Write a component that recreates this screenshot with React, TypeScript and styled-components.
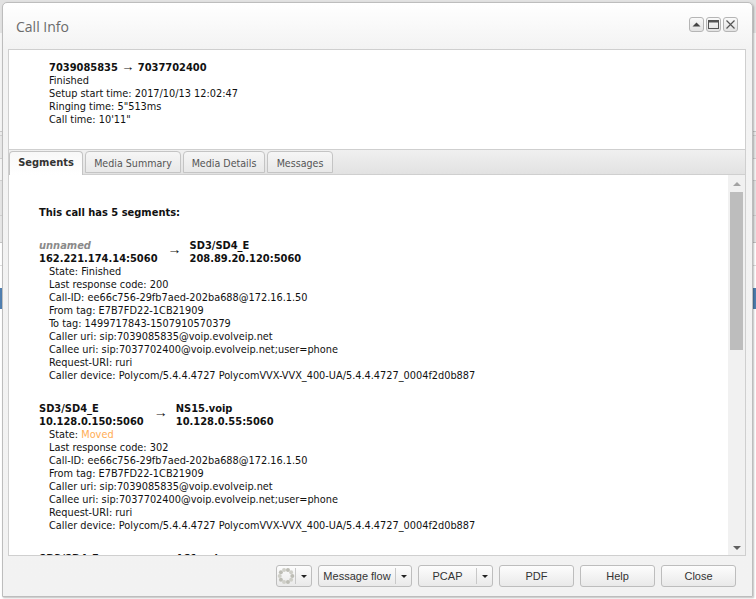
import React from "react";
import styled, { createGlobalStyle } from "styled-components";

const Global = createGlobalStyle`
  html, body { margin: 0; padding: 0; width: 756px; height: 599px; overflow: hidden; background: #fff; }
  #root { width: 756px; height: 599px; position: relative; overflow: hidden; }
`;

const Backdrop = styled.div`
  display: flex;
  flex-direction: column;
  width: 756px;
  height: 599px;
  background: #fff;
`;
const BackdropBand = styled.div<{ $h: number; $bg: string; $line?: string }>`
  height: ${(p) => p.$h}px;
  background: ${(p) => p.$bg};
  border-bottom: ${(p) => (p.$line ? `1px solid ${p.$line}` : "none")};
  flex: none;
  box-sizing: border-box;
`;

const Win = styled.section`
  position: absolute;
  left: 2px;
  top: 2px;
  width: 751px;
  height: 595px;
  box-sizing: border-box;
  display: flex;
  flex-direction: column;
  border: 1px solid #bdbdbd;
  border-radius: 5px 5px 0 0;
  background: linear-gradient(#ffffff 0, #f3f3f3 46px, #f2f2f2 100%);
  box-shadow: 1px 1px 2px rgba(0, 0, 0, 0.25);
  font-family: "DejaVu Sans Condensed", "DejaVu Sans", sans-serif;
  font-stretch: condensed;
  font-size: 10.85px;
  line-height: 13px;
  color: #111;
`;
const TitleBar = styled.header`
  height: 46px;
  flex: none;
  display: flex;
  align-items: flex-start;
  justify-content: space-between;
  box-sizing: border-box;
  padding: 14px 14px 0 13px;
`;
const Title = styled.h1`
  margin: 0;
  font-family: "Open Sans", sans-serif;
  font-stretch: normal;
  font-size: 14px;
  font-weight: 400;
  line-height: 19px;
  color: #6b6b6b;
`;
const WinControls = styled.div`
  display: flex;
  gap: 2px;
`;
const WinControl = styled.button`
  width: 15px;
  height: 15px;
  padding: 0;
  box-sizing: border-box;
  border: 1px solid #b5b5b5;
  border-radius: 3px;
  background: linear-gradient(#fafafa, #e2e2e2);
  display: flex;
  align-items: center;
  justify-content: center;
`;
const Body = styled.div`
  flex: none;
  height: 507px;
  margin: 0 6px 0 5px;
  box-sizing: border-box;
  border: 1px solid #cfcfcf;
  background: #fff;
  display: flex;
  flex-direction: column;
`;
const Summary = styled.div`
  height: 99px;
  flex: none;
  box-sizing: border-box;
  padding: 11px 0 0 40px;
`;
const Strong = styled.div`
  font-weight: 700;
  font-size: 11px;
`;
const HeadArrow = styled.span`
  font-family: "Liberation Sans", sans-serif;
  font-size: 13px;
  line-height: 0;
`;
const TabStrip = styled.nav`
  height: 26px;
  flex: none;
  box-sizing: border-box;
  display: flex;
  align-items: flex-end;
  gap: 2px;
  border-top: 1px solid #cfcfcf;
  border-bottom: 1px solid #cfcfcf;
  background: linear-gradient(#f0f0f0, #e2e2e2);
`;
const Tab = styled.div<{ $active?: boolean; $w: number }>`
  width: ${(p) => p.$w}px;
  height: ${(p) => (p.$active ? 24 : 22)}px;
  margin-bottom: ${(p) => (p.$active ? -1 : 1)}px;
  box-sizing: border-box;
  border: 1px solid #c4c4c4;
  border-bottom: ${(p) => (p.$active ? "none" : "1px solid #c4c4c4")};
  border-radius: 4px 4px 0 0;
  background: ${(p) => (p.$active ? "linear-gradient(#f8f8f8, #ffffff)" : "linear-gradient(#f6f6f6, #e8e8e8)")};
  color: ${(p) => (p.$active ? "#333" : "#555")};
  font-weight: ${(p) => (p.$active ? 700 : 400)};
  font-size: ${(p) => (p.$active ? 11 : 10.6)}px;
  text-align: center;
  line-height: 22px;
`;
const ContentRow = styled.div`
  flex: 1;
  min-height: 0;
  display: flex;
`;
const Scroller = styled.div`
  flex: 1;
  min-width: 0;
  overflow: hidden;
  padding: 31px 0 0 30px;
`;
const Heading = styled.div`
  font-weight: 700;
  font-size: 11px;
  margin-bottom: 20px;
`;
const Segment = styled.article`
  margin-bottom: 20px;
`;
const Route = styled.div`
  display: flex;
  align-items: center;
  gap: 10px;
  font-weight: 700;
  font-size: 11px;
`;
const Unnamed = styled.div`
  font-style: italic;
  color: #8a8a8a;
`;
const RouteArrow = styled.span`
  font-family: "Liberation Sans", sans-serif;
  font-weight: 400;
  font-size: 14px;
  width: 12px;
  margin-top: -6px;
`;
const Details = styled.div`
  padding-left: 10px;
`;
const Moved = styled.span`
  color: #ffad55;
`;
const ScrollTrack = styled.div`
  width: 17px;
  flex: none;
  background: #f1f1f1;
  display: flex;
  flex-direction: column;
  align-items: center;
  box-sizing: border-box;
  padding-top: 7px;
`;
const ArrowUp = styled.i`
  width: 0;
  height: 0;
  border-left: 4px solid transparent;
  border-right: 4px solid transparent;
  border-bottom: 4px solid #a3a3a3;
`;
const Thumb = styled.div`
  width: 13px;
  height: 158px;
  margin-top: 6px;
  background: #bdbdbd;
`;
const ArrowDown = styled.i`
  width: 0;
  height: 0;
  margin-top: auto;
  margin-bottom: 5px;
  border-left: 4px solid transparent;
  border-right: 4px solid transparent;
  border-top: 4px solid #606060;
`;
const Footer = styled.footer`
  flex: 1;
  display: flex;
  justify-content: flex-end;
  gap: 6px;
  padding: 9px 16px 0 0;
  font-family: "Liberation Sans", sans-serif;
  font-stretch: normal;
  font-size: 11px;
`;
const Btn = styled.button<{ $w: number }>`
  width: ${(p) => p.$w}px;
  height: 22px;
  padding: 0;
  box-sizing: border-box;
  border: 1px solid #bdbdbd;
  border-radius: 3px;
  background: linear-gradient(#fdfdfd, #e9e9e9);
  color: #333;
  font: inherit;
  display: flex;
  align-items: center;
  justify-content: center;
`;
const BtnLabel = styled.span`
  flex: 1;
  display: flex;
  align-items: center;
  justify-content: center;
`;
const CaretZone = styled.span`
  width: 15px;
  height: 16px;
  flex: none;
  border-left: 1px solid #c8c8c8;
  display: flex;
  align-items: center;
  justify-content: center;
`;
const Caret = styled.i`
  width: 0;
  height: 0;
  border-left: 3px solid transparent;
  border-right: 3px solid transparent;
  border-top: 3px solid #222;
`;

const Spinner = () => (
  <svg width="18" height="18" viewBox="0 0 18 18">
    {Array.from({ length: 10 }).map((_, i) => {
      const a = (i / 10) * Math.PI * 2;
      return (
        <circle key={i} cx={9 + 6.3 * Math.cos(a)} cy={9 + 6.3 * Math.sin(a)} r={2} fill={i % 2 ? "#cfcfc8" : "#bdbdb5"} />
      );
    })}
  </svg>
);

const seg1 = [
  "Last response code: 200",
  "Call-ID: ee66c756-29fb7aed-202ba688@172.16.1.50",
  "From tag: E7B7FD22-1CB21909",
  "To tag: 1499717843-1507910570379",
  "Caller uri: sip:7039085835@voip.evolveip.net",
  "Callee uri: sip:7037702400@voip.evolveip.net;user=phone",
  "Request-URI: ruri",
  "Caller device: Polycom/5.4.4.4727 PolycomVVX-VVX_400-UA/5.4.4.4727_0004f2d0b887",
];
const seg2 = [
  "Last response code: 302",
  "Call-ID: ee66c756-29fb7aed-202ba688@172.16.1.50",
  "From tag: E7B7FD22-1CB21909",
  "Caller uri: sip:7039085835@voip.evolveip.net",
  "Callee uri: sip:7037702400@voip.evolveip.net;user=phone",
  "Request-URI: ruri",
  "Caller device: Polycom/5.4.4.4727 PolycomVVX-VVX_400-UA/5.4.4.4727_0004f2d0b887",
];

const bands: [number, string, string?][] = [
  [33, "#e2e2e2"],
  [99, "#f5f5f5", "#c8c8c8"],
  [4, "#ececec", "#d0d0d0"],
  [23, "#e8e8e8", "#cfcfcf"],
  [22, "#f4f4f4", "#cfcfcf"],
  [35, "#e4e4e4", "#cfcfcf"],
  [27, "#e6e6e6", "#c4c4c4"],
  [23, "#ffffff", "#dddddd"],
  [22, "#ffffff"],
  [21, "#4f7fb0"],
  [270, "#ffffff"],
];

export default function App() {
  return (
    <>
      <Global />
      <Backdrop>
        {bands.map(([h, bg, line], i) => (
          <BackdropBand key={i} $h={h} $bg={bg} $line={line} />
        ))}
      </Backdrop>
      <Win>
        <TitleBar>
          <Title>Call Info</Title>
          <WinControls>
            <WinControl aria-label="Collapse">
              <svg width="9" height="9" viewBox="0 0 9 9"><path d="M0.5 6.5 L4.5 2.5 L8.5 6.5 Z" fill="#444" /></svg>
            </WinControl>
            <WinControl aria-label="Maximize">
              <svg width="11" height="9" viewBox="0 0 11 9"><rect x="0.5" y="0.5" width="10" height="8" fill="none" stroke="#555" /><rect x="0.5" y="0.5" width="10" height="2" fill="#555" /></svg>
            </WinControl>
            <WinControl aria-label="Close">
              <svg width="9" height="9" viewBox="0 0 9 9"><path d="M0.5 0.5 L8.5 8.5 M8.5 0.5 L0.5 8.5" stroke="#555" strokeWidth="1.2" /></svg>
            </WinControl>
          </WinControls>
        </TitleBar>
        <Body>
          <Summary>
            <Strong>7039085835 <HeadArrow>→</HeadArrow> 7037702400</Strong>
            <div>Finished</div>
            <div>Setup start time: 2017/10/13 12:02:47</div>
            <div>Ringing time: 5"513ms</div>
            <div>Call time: 10'11"</div>
          </Summary>
          <TabStrip>
            <Tab $active $w={74}>Segments</Tab>
            <Tab $w={96}>Media Summary</Tab>
            <Tab $w={82}>Media Details</Tab>
            <Tab $w={66}>Messages</Tab>
          </TabStrip>
          <ContentRow>
            <Scroller>
              <Heading>This call has 5 segments:</Heading>
              <Segment>
                <Route>
                  <div>
                    <Unnamed>unnamed</Unnamed>
                    <div>162.221.174.14:5060</div>
                  </div>
                  <RouteArrow>→</RouteArrow>
                  <div>
                    <div>SD3/SD4_E</div>
                    <div>208.89.20.120:5060</div>
                  </div>
                </Route>
                <Details>
                  <div>State: Finished</div>
                  {seg1.map((l) => <div key={l}>{l}</div>)}
                </Details>
              </Segment>
              <Segment>
                <Route>
                  <div>
                    <div>SD3/SD4_E</div>
                    <div>10.128.0.150:5060</div>
                  </div>
                  <RouteArrow>→</RouteArrow>
                  <div>
                    <div>NS15.voip</div>
                    <div>10.128.0.55:5060</div>
                  </div>
                </Route>
                <Details>
                  <div>State: <Moved>Moved</Moved></div>
                  {seg2.map((l) => <div key={l}>{l}</div>)}
                </Details>
              </Segment>
              <Segment>
                <Route>
                  <div>
                    <div>SD3/SD4_E</div>
                    <div>10.128.0.150:5060</div>
                  </div>
                  <RouteArrow>→</RouteArrow>
                  <div>
                    <div>AS1.voip</div>
                    <div>10.128.0.60:5060</div>
                  </div>
                </Route>
              </Segment>
            </Scroller>
            <ScrollTrack>
              <ArrowUp />
              <Thumb />
              <ArrowDown />
            </ScrollTrack>
          </ContentRow>
        </Body>
        <Footer>
          <Btn $w={36}><BtnLabel><Spinner /></BtnLabel><CaretZone><Caret /></CaretZone></Btn>
          <Btn $w={94}><BtnLabel>Message flow</BtnLabel><CaretZone><Caret /></CaretZone></Btn>
          <Btn $w={75}><BtnLabel>PCAP</BtnLabel><CaretZone><Caret /></CaretZone></Btn>
          <Btn $w={75}>PDF</Btn>
          <Btn $w={75}>Help</Btn>
          <Btn $w={75}>Close</Btn>
        </Footer>
      </Win>
    </>
  );
}
